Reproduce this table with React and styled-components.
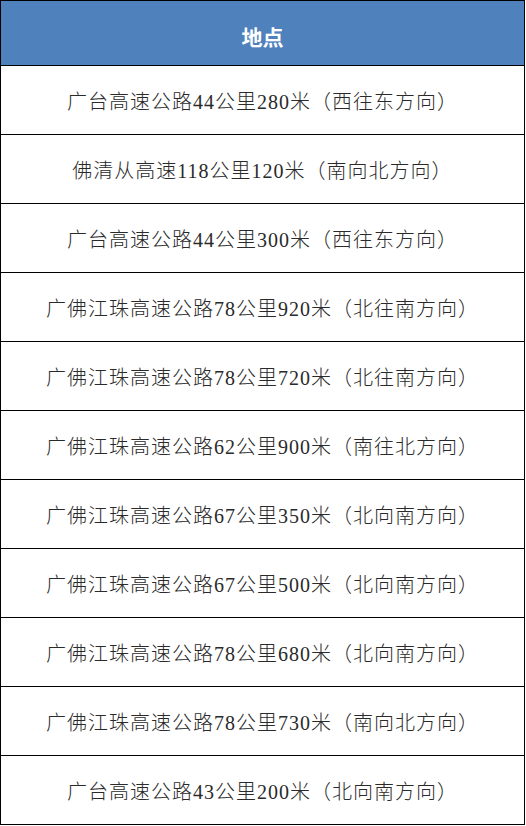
import React from 'react';
import styled, { createGlobalStyle } from 'styled-components';

const places = [
  '广台高速公路44公里280米（西往东方向）',
  '佛清从高速118公里120米（南向北方向）',
  '广台高速公路44公里300米（西往东方向）',
  '广佛江珠高速公路78公里920米（北往南方向）',
  '广佛江珠高速公路78公里720米（北往南方向）',
  '广佛江珠高速公路62公里900米（南往北方向）',
  '广佛江珠高速公路67公里350米（北向南方向）',
  '广佛江珠高速公路67公里500米（北向南方向）',
  '广佛江珠高速公路78公里680米（北向南方向）',
  '广佛江珠高速公路78公里730米（南向北方向）',
  '广台高速公路43公里200米（北向南方向）',
];

function App() {
  return (
    <>
      <GlobalStyle />
      <StyledTable>
        <HeaderCell>地点</HeaderCell>
        {places.map((place) => (
          <Row key={place}>{place}</Row>
        ))}
      </StyledTable>
    </>
  );
}

export default App;

const GlobalStyle = createGlobalStyle`
  body {
    margin: 0;
    background: #fff;
    font-family: "Liberation Serif", "Noto Sans CJK SC", serif;
  }
`;

const StyledTable = styled.div`
  width: 525px;
  box-sizing: border-box;
  border: 1px solid #000;
  display: flex;
  flex-direction: column;
`;

const HeaderCell = styled.div`
  height: 65px;
  border-bottom: 1px solid #000;
  background-color: #4f81bd;
  color: #fff;
  display: flex;
  align-items: center;
  justify-content: center;
  font-family: "Noto Sans CJK SC", sans-serif;
  font-size: 21px;
  font-weight: bold;
  padding-top: 6px;
  box-sizing: border-box;
`;

const Row = styled.div`
  height: 68px;
  display: flex;
  align-items: center;
  justify-content: center;
  color: #2a2a2a;
  font-size: 20px;
  font-weight: 300;
  letter-spacing: 1px;
  & + & {
    border-top: 1px solid #000;
  }
`;
